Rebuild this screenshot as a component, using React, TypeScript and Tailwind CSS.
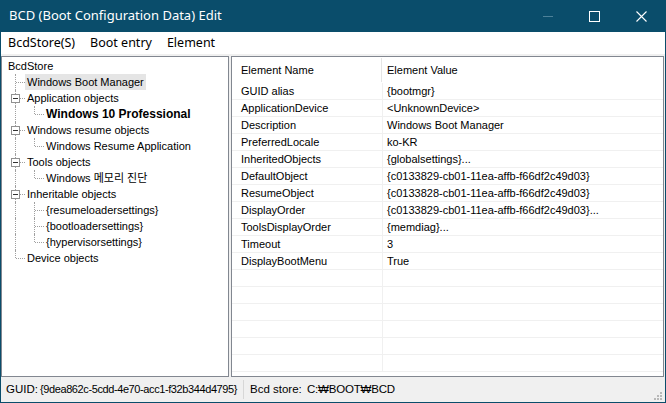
import React from 'react';

type Cell = 'I' | 'T' | 'L' | 'TB' | 'LB' | ' ';

interface TreeRow {
  label: string;
  cells: Cell[];
  bold?: boolean;
  selected?: boolean;
}

const treeRows: TreeRow[] = [
  { label: 'BcdStore', cells: [] },
  { label: 'Windows Boot Manager', cells: ['T'], selected: true },
  { label: 'Application objects', cells: ['TB'] },
  { label: 'Windows 10 Professional', cells: ['I', 'L'], bold: true },
  { label: 'Windows resume objects', cells: ['TB'] },
  { label: 'Windows Resume Application', cells: ['I', 'L'] },
  { label: 'Tools objects', cells: ['TB'] },
  { label: 'Windows 메모리 진단', cells: ['I', 'L'] },
  { label: 'Inheritable objects', cells: ['TB'] },
  { label: '{resumeloadersettings}', cells: ['I', 'T'] },
  { label: '{bootloadersettings}', cells: ['I', 'T'] },
  { label: '{hypervisorsettings}', cells: ['I', 'L'] },
  { label: 'Device objects', cells: ['L'] },
];

const elements: [string, string][] = [
  ['GUID alias', '{bootmgr}'],
  ['ApplicationDevice', '<UnknownDevice>'],
  ['Description', 'Windows Boot Manager'],
  ['PreferredLocale', 'ko-KR'],
  ['InheritedObjects', '{globalsettings}...'],
  ['DefaultObject', '{c0133829-cb01-11ea-affb-f66df2c49d03}'],
  ['ResumeObject', '{c0133828-cb01-11ea-affb-f66df2c49d03}'],
  ['DisplayOrder', '{c0133829-cb01-11ea-affb-f66df2c49d03}...'],
  ['ToolsDisplayOrder', '{memdiag}...'],
  ['Timeout', '3'],
  ['DisplayBootMenu', 'True'],
  ['', ''],
  ['', ''],
  ['', ''],
  ['', ''],
  ['', ''],
  ['', ''],
];

const uiFont = "font-['Noto_Sans','Noto_Sans_CJK_KR',sans-serif]";
const listFont = "font-['Liberation_Sans','Noto_Sans_CJK_KR',sans-serif]";

function Connector({ type }: { type: Cell }) {
  const hasBox = type === 'TB' || type === 'LB';
  const full = type === 'I' || type === 'T' || type === 'TB';
  const horiz = type !== 'I' && type !== ' ';
  return (
    <div className="relative w-[19px] h-[16px] shrink-0">
      {type !== ' ' && (
        <span
          className={`absolute left-[9px] top-0 w-0 border-l border-dotted border-[#a0a0a0] ${full ? 'h-[16px]' : 'h-[8px]'}`}
        />
      )}
      {horiz && (
        <span className="absolute left-[10px] top-[8px] w-[9px] h-0 border-t border-dotted border-[#a0a0a0]" />
      )}
      {hasBox && (
        <span className="absolute left-[5px] top-[4px] w-[9px] h-[9px] border border-[#919191] bg-white flex items-center justify-center">
          <span className="w-[5px] h-px bg-[#333]" />
        </span>
      )}
    </div>
  );
}

function TitleBar() {
  return (
    <div className="h-[32px] flex items-center shrink-0">
      <span className={`${uiFont} pl-[9px] text-[13px] text-white flex-1`}>
        BCD (Boot Configuration Data) Edit
      </span>
      <div className="flex items-center h-full pr-[1px]">
        <div className="w-[47px] h-full flex items-center justify-center">
          <span className="w-[10px] h-px bg-[#4d8199]" />
        </div>
        <div className="w-[47px] h-full flex items-center justify-center">
          <span className="w-[11px] h-[11px] border border-white" />
        </div>
        <div className="w-[47px] h-full flex items-center justify-center">
          <svg width="11" height="11" viewBox="0 0 11 11">
            <path d="M0.5 0.5 L10.5 10.5 M10.5 0.5 L0.5 10.5" stroke="#fff" strokeWidth="1.1" />
          </svg>
        </div>
      </div>
    </div>
  );
}

function MenuBar() {
  return (
    <div className={`${uiFont} h-[22px] bg-white flex items-center text-[12.5px] text-black shrink-0`}>
      <span className="pl-[7px] pr-[15px]">BcdStore(S)</span>
      <span className="pr-[15px]">Boot entry</span>
      <span>Element</span>
    </div>
  );
}

function TreePane() {
  return (
    <div className={`${listFont} w-[228px] shrink-0 border border-[#828790] bg-white pt-[1px] text-[11px] text-black`}>
      {treeRows.map((row, i) => (
        <div key={i} className="flex items-center h-[16px] pl-[4px] whitespace-nowrap">
          {row.cells.length === 0 && <span className="pl-[2px]">{row.label}</span>}
          {row.cells.map((c, j) => (
            <Connector key={j} type={c} />
          ))}
          {row.cells.length > 0 && (
            <span
              className={`h-[16px] leading-[16px] px-[2px] ${row.selected ? 'bg-[#e5e5e5]' : ''} ${row.bold ? 'font-bold text-[12px]' : ''}`}
            >
              {row.label}
            </span>
          )}
        </div>
      ))}
    </div>
  );
}

function ElementPane() {
  return (
    <div className={`${listFont} flex-1 border border-[#828790] bg-white overflow-hidden text-[11px] text-black`}>
      <div className="grid grid-cols-[150px_1fr] h-[26px] items-center">
        <div className="h-[24px] flex items-center pl-[9px] border-r border-[#e5e5e5]">Element Name</div>
        <div className="pl-[5px]">Element Value</div>
      </div>
      {elements.map(([name, value], i) => (
        <div key={i} className="grid grid-cols-[151px_1fr] h-[17px] border-b border-[#f0f0f0]">
          <div className="pl-[9px] leading-[16px] border-r border-[#f0f0f0] whitespace-nowrap">{name}</div>
          <div className="pl-[4px] leading-[16px] whitespace-nowrap">{value}</div>
        </div>
      ))}
    </div>
  );
}

function StatusBar() {
  return (
    <div className={`${listFont} h-[25px] flex items-center text-[11px] text-black shrink-0 relative whitespace-nowrap`}>
      <span className="pl-[5px] w-[39px] text-[11.5px]">GUID:</span>
      <span className="w-[203px] tracking-[-0.4px]">{'{9dea862c-5cdd-4e70-acc1-f32b344d4795}'}</span>
      <span className="w-px h-[19px] bg-[#d7d7d7]" />
      <span className="pl-[6px] w-[63px] text-[11.5px]">Bcd store:</span>
      <span className="text-[11.5px] tracking-[-0.2px]">C:₩BOOT₩BCD</span>
      <svg className="absolute right-[2px] bottom-[1px]" width="10" height="10" viewBox="0 0 10 10">
        <rect x="7" y="1" width="2" height="2" fill="#b8b8b8" />
        <rect x="4" y="4" width="2" height="2" fill="#b8b8b8" />
        <rect x="7" y="4" width="2" height="2" fill="#b8b8b8" />
        <rect x="1" y="7" width="2" height="2" fill="#b8b8b8" />
        <rect x="4" y="7" width="2" height="2" fill="#b8b8b8" />
        <rect x="7" y="7" width="2" height="2" fill="#b8b8b8" />
      </svg>
    </div>
  );
}

export default function App() {
  return (
    <div className="w-[666px] h-[403px] bg-[#0a4d6b] flex flex-col overflow-hidden">
      <TitleBar />
      <div className="flex-1 mx-[1px] mb-[1px] bg-[#f0f0f0] flex flex-col min-h-0">
        <MenuBar />
        <div className="flex-1 flex gap-[2px] pt-[2px] pr-[1px] min-h-0">
          <TreePane />
          <ElementPane />
        </div>
        <StatusBar />
      </div>
    </div>
  );
}
